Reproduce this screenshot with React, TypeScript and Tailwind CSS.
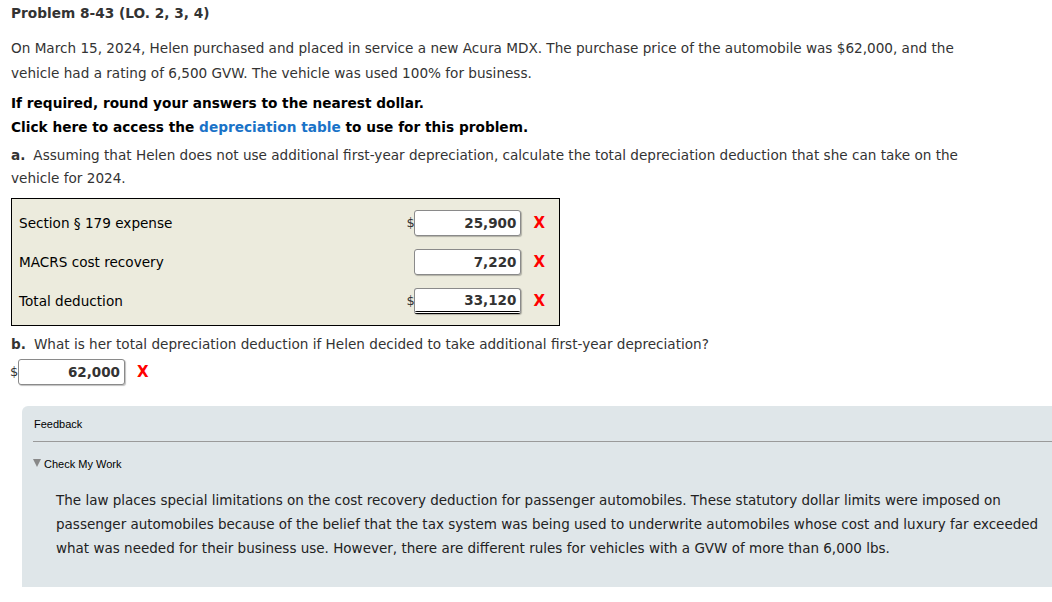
import React from "react";

const V = { fontFamily: '"DejaVu Sans", Verdana, sans-serif' };

function Money({ value, dollar, total, w = "w-[107px]" }: { value: string; dollar?: boolean; total?: boolean; w?: string }) {
  return (
    <div className="flex items-center">
      <span className={`w-[8px] text-[13px] text-[#333] ${dollar ? "" : "invisible"}`}>$</span>
      <div
        className={`${w} h-[26px] bg-white border border-[#8a8a8a] rounded-[3px] shadow-[1px_1px_1px_rgba(0,0,0,0.25)] flex items-center justify-end pr-[4px] font-bold text-[13.5px] text-[#333] ${total ? "border-b-[3px] border-b-black [border-bottom-style:double]" : ""}`}
      >
        {value}
      </div>
      <span className="ml-[12px] text-[#ff0000] font-bold text-[15px]">X</span>
    </div>
  );
}

export default function App() {
  return (
    <div className="w-[1052px] h-[602px] bg-white overflow-hidden text-[#333]" style={V}>
      <div className="pl-[11px] pt-[3px]">
        <div className="font-bold text-[13.7px] leading-[20px]">Problem 8-43 (LO. 2, 3, 4)</div>
        <p className="mt-[13px] text-[13.6px] leading-[25px] w-[1000px] whitespace-nowrap">
          On March 15, 2024, Helen purchased and placed in service a new Acura MDX. The purchase price of the automobile was $62,000, and the<br />vehicle had a rating of 6,500 GVW. The vehicle was used 100% for business.
        </p>
        <div className="mt-[5px] font-bold text-[13.7px] leading-[24px] text-black">If required, round your answers to the nearest dollar.</div>
        <div className="font-bold text-[13.7px] leading-[24px] text-black">
          Click here to access the <span className="text-[#1a73c8]">depreciation table</span> to use for this problem.
        </div>
        <p className="mt-[5px] text-[13.6px] leading-[23px] w-[1000px] whitespace-nowrap">
          <span className="font-bold mr-[8px]">a.</span>Assuming that Helen does not use additional first-year depreciation, calculate the total depreciation deduction that she can take on the<br />vehicle for 2024.
        </p>
        <div className="mt-[8px] w-[549px] h-[128px] bg-[#ecebdd] border border-black flex flex-col justify-center gap-[13px] pl-[7px] text-[13.6px] text-black">
          <div className="flex items-center justify-between pr-[14px]">
            <span>Section § 179 expense</span>
            <Money value="25,900" dollar />
          </div>
          <div className="flex items-center justify-between pr-[14px]">
            <span>MACRS cost recovery</span>
            <Money value="7,220" />
          </div>
          <div className="flex items-center justify-between pr-[14px]">
            <span>Total deduction</span>
            <Money value="33,120" dollar total />
          </div>
        </div>
        <p className="mt-[7px] text-[13.6px] leading-[22px]">
          <span className="font-bold mr-[8px]">b.</span>What is her total depreciation deduction if Helen decided to take additional first-year depreciation?
        </p>
        <div className="mt-[4px] -ml-[1px]">
          <Money value="62,000" dollar />
        </div>
      </div>
      <div className="ml-[22px] mt-[21px] bg-[#dfe6e9] rounded-tl-[6px] h-[181px] pl-[11px] pt-[10px]">
        <div className="text-[11px] text-black leading-[16px] pl-[1px]" style={{ fontFamily: '"Liberation Sans", Arial, sans-serif' }}>Feedback</div>
        <div className="mt-[9px] border-t border-[#9a9a9a]" />
        <div className="mt-[14px] flex items-center text-[11px] text-black leading-[16px]" style={{ fontFamily: '"Liberation Sans", Arial, sans-serif' }}>
          <span className="w-0 h-0 border-l-[4px] border-r-[4px] border-t-[8px] border-l-transparent border-r-transparent border-t-[#888] mr-[3px] -mt-[3px]" />
          Check My Work
        </div>
        <p className="mt-[16px] ml-[23px] text-[13.5px] leading-[24px] text-[#222] whitespace-nowrap">
          The law places special limitations on the cost recovery deduction for passenger automobiles. These statutory dollar limits were imposed on<br />passenger automobiles because of the belief that the tax system was being used to underwrite automobiles whose cost and luxury far exceeded<br />what was needed for their business use. However, there are different rules for vehicles with a GVW of more than 6,000 lbs.
        </p>
      </div>
    </div>
  );
}
